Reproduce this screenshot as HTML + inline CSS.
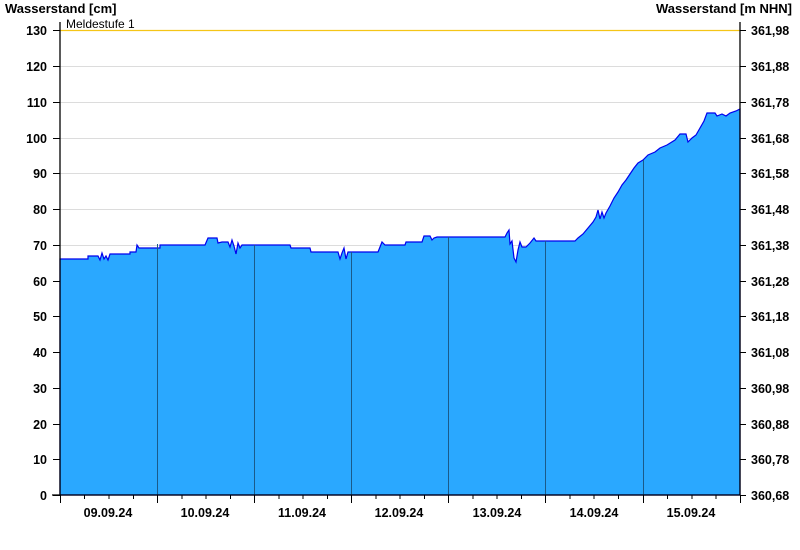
<!DOCTYPE html>
<html><head><meta charset="utf-8"><style>body{margin:0;background:#fff}svg{display:block}</style></head><body>
<svg width="800" height="550" xmlns="http://www.w3.org/2000/svg" font-family="Liberation Sans, Arial, sans-serif">
<g stroke="#dcdcdc" stroke-width="1">
<line x1="60" x2="740" y1="66.5" y2="66.5"/><line x1="60" x2="740" y1="102.5" y2="102.5"/><line x1="60" x2="740" y1="138.5" y2="138.5"/><line x1="60" x2="740" y1="173.5" y2="173.5"/><line x1="60" x2="740" y1="209.5" y2="209.5"/><line x1="60" x2="740" y1="245.5" y2="245.5"/><line x1="60" x2="740" y1="281.5" y2="281.5"/><line x1="60" x2="740" y1="316.5" y2="316.5"/><line x1="60" x2="740" y1="352.5" y2="352.5"/><line x1="60" x2="740" y1="388.5" y2="388.5"/><line x1="60" x2="740" y1="424.5" y2="424.5"/><line x1="60" x2="740" y1="459.5" y2="459.5"/>
</g>
<line x1="60" x2="740" y1="30.5" y2="30.5" stroke="#f5c518" stroke-width="1.2"/>
<polygon fill="#2aa8ff" stroke="#0000ee" stroke-width="1.2" stroke-linejoin="miter" points="60,259 88,259 88,256 98,256 100,260 102,253 104,259 106,256 108,260 110,254 112,254 130,254 130,252 136,252 137,245 139,248 160,248 160,245 205,245 208,238 217,238 218,243 222,242 228,242 230,247 232,240 234,246 236,254 238,243 240,248 242,245 290,245 291,248 310,248 311,252 338,252 340,259 342,253 344,248 346,259 348,252 378,252 380,247 382,242 385,245 405,245 406,242 422,242 424,236 430,236 432,240 434,238 437,237 505,237 507,233 509,230 510,244 512,241 514,258 516,262 518,250 520,242 522,247 526,247 530,243 534,238 536,241 575,241 578,238 583,234 588,228 593,222 596,217 598,210 600,219 602,212 604,218 606,213 610,206 614,198 618,192 622,185 626,180 630,174 634,168 638,163 643,160 648,155 655,152 660,148 667,145 675,140 680,134 686,134 688,142 692,138 696,135 700,128 704,121 707,113 715,113 717,116 722,114 726,116 730,113 736,111 740,109 740,495 60,495"/>
<g stroke="#1a5a8a" stroke-width="1">
<line x1="157.5" x2="157.5" y1="244" y2="495"/><line x1="254.5" x2="254.5" y1="245" y2="495"/><line x1="351.5" x2="351.5" y1="252" y2="495"/><line x1="448.5" x2="448.5" y1="237" y2="495"/><line x1="545.5" x2="545.5" y1="241" y2="495"/><line x1="643.5" x2="643.5" y1="160" y2="495"/>
</g>
<g stroke="#000" stroke-width="1.3">
<line x1="60" x2="60" y1="22" y2="495"/><line x1="740" x2="740" y1="22" y2="495"/><line x1="52" x2="740" y1="495" y2="495"/>
</g>
<g stroke="#000" stroke-width="1">
<path d="M53 30.5H60M53 66.5H60M53 102.5H60M53 138.5H60M53 173.5H60M53 209.5H60M53 245.5H60M53 281.5H60M53 316.5H60M53 352.5H60M53 388.5H60M53 424.5H60M53 459.5H60M53 495.5H60"/>
<path d="M740 30.5H746M740 66.5H746M740 102.5H746M740 138.5H746M740 173.5H746M740 209.5H746M740 245.5H746M740 281.5H746M740 316.5H746M740 352.5H746M740 388.5H746M740 424.5H746M740 459.5H746M740 495.5H746"/>
<path d="M60.5 495V503M157.5 495V503M254.5 495V503M351.5 495V503M448.5 495V503M545.5 495V503M643.5 495V503M740.5 495V503"/>
<path d="M84.5 495V499M109 495V499M133.5 495V499M182 495V499M206 495V499M230.5 495V499M279 495V499M303 495V499M327.5 495V499M376 495V499M400 495V499M424.5 495V499M473 495V499M497 495V499M521.5 495V499M570 495V499M594 495V499M618.5 495V499M667.5 495V499M692 495V499M716 495V499"/>
</g>
<g font-size="13" font-weight="bold" fill="#000">
<text x="5" y="13">Wasserstand [cm]</text>
<text x="792" y="13" text-anchor="end">Wasserstand [m NHN]</text>
</g>
<text x="66" y="28" font-size="12" fill="#000">Meldestufe 1</text>
<g font-size="12.5" font-weight="bold" text-anchor="end" fill="#000">
<text x="47" y="35">130</text><text x="47" y="71">120</text><text x="47" y="107">110</text><text x="47" y="143">100</text><text x="47" y="178">90</text><text x="47" y="214">80</text><text x="47" y="250">70</text><text x="47" y="286">60</text><text x="47" y="321">50</text><text x="47" y="357">40</text><text x="47" y="393">30</text><text x="47" y="429">20</text><text x="47" y="464">10</text><text x="47" y="500">0</text>
</g>
<g font-size="12.5" font-weight="bold" fill="#000">
<text x="751" y="35">361,98</text><text x="751" y="71">361,88</text><text x="751" y="107">361,78</text><text x="751" y="143">361,68</text><text x="751" y="178">361,58</text><text x="751" y="214">361,48</text><text x="751" y="250">361,38</text><text x="751" y="286">361,28</text><text x="751" y="321">361,18</text><text x="751" y="357">361,08</text><text x="751" y="393">360,98</text><text x="751" y="429">360,88</text><text x="751" y="464">360,78</text><text x="751" y="500">360,68</text>
</g>
<g font-size="12.5" font-weight="bold" text-anchor="middle" fill="#000">
<text x="108" y="517">09.09.24</text><text x="205" y="517">10.09.24</text><text x="302" y="517">11.09.24</text><text x="399" y="517">12.09.24</text><text x="497" y="517">13.09.24</text><text x="594" y="517">14.09.24</text><text x="691" y="517">15.09.24</text>
</g>
</svg>
</body></html>
